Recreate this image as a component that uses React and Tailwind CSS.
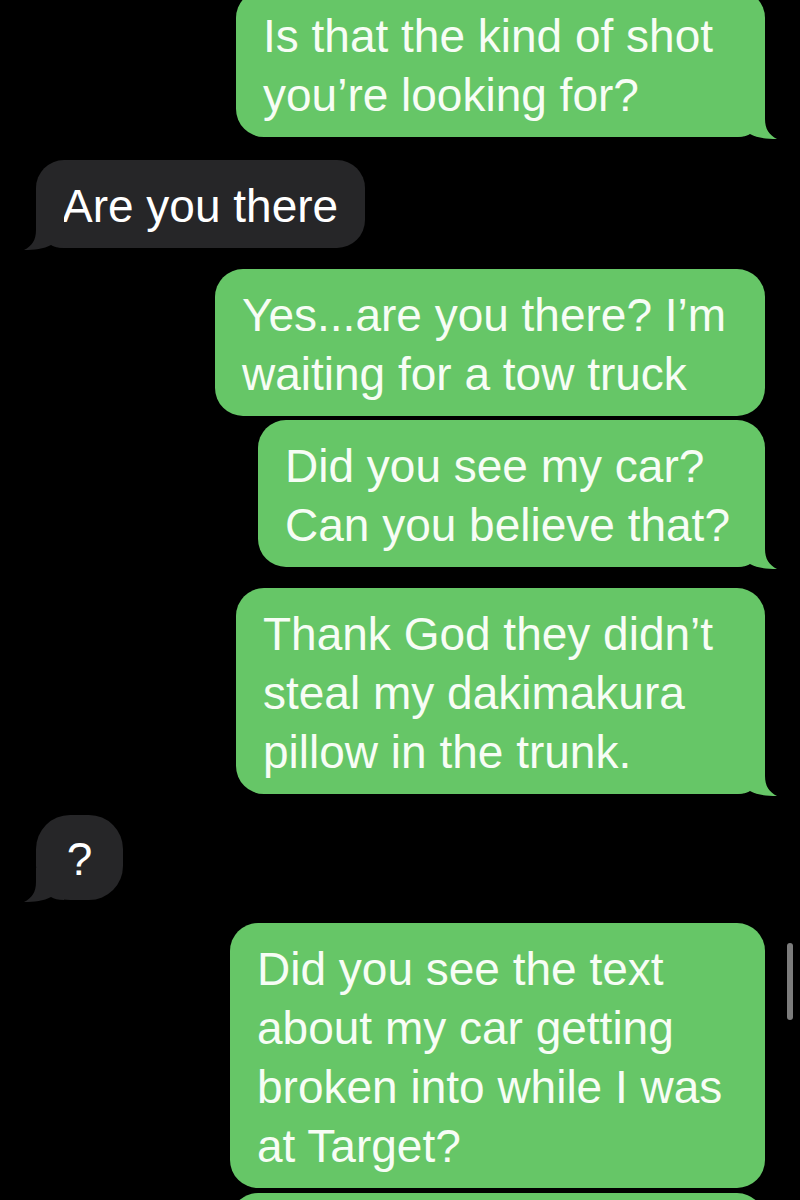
import React from "react";

function Tail({ side, color }) {
  const pos =
    side === "right"
      ? "right-[-12px] bottom-[-2px]"
      : "left-[-12px] bottom-[-2px] -scale-x-100";
  return (
    <svg
      className={`absolute ${pos} h-[34px] w-[40px]`}
      viewBox="0 0 40 34"
      aria-hidden="true"
    >
      <path
        d="M0 32 C6 32 10 31 13 29 C20 33 30 34 40 34 C32 30 28 24 28 14 L28 0 L0 0 Z"
        fill={color}
      />
    </svg>
  );
}

const GREEN = "#66c667";
const GREY = "#262628";

function Sent({ lines, w, mt, tail }) {
  return (
    <div
      className={`relative self-end mr-[35px] rounded-[28px] bg-[#66c667] pl-[27px] pt-[17px] pb-[12px] text-[46px] leading-[59px] text-[#f7fdf5] ${w} ${mt}`}
    >
      {lines.map((l, i) => (
        <div key={i} className="whitespace-nowrap">
          {l}
        </div>
      ))}
      {tail && <Tail side="right" color={GREEN} />}
    </div>
  );
}

export default function App() {
  return (
    <div className="relative h-[1200px] w-[800px] overflow-hidden bg-black font-['Liberation_Sans',Arial,sans-serif]">
      <div className="flex flex-col">
        <Sent
          lines={["Is that the kind of shot", "you\u2019re looking for?"]}
          w="w-[529px]"
          mt="mt-[-10px]"
          tail
        />

        <div className="relative self-start ml-[36px] mt-[23px] w-[329px] rounded-[28px] bg-[#262628] pl-[26px] pt-[17px] pb-[12px] text-[46px] leading-[59px] text-white">
          <div className="whitespace-nowrap">Are you there</div>
          <Tail side="left" color={GREY} />
        </div>

        <Sent
          lines={["Yes...are you there? I\u2019m", "waiting for a tow truck"]}
          w="w-[550px]"
          mt="mt-[21px]"
        />

        <Sent
          lines={["Did you see my car?", "Can you believe that?"]}
          w="w-[507px]"
          mt="mt-[4px]"
          tail
        />

        <Sent
          lines={[
            "Thank God they didn\u2019t",
            "steal my dakimakura",
            "pillow in the trunk.",
          ]}
          w="w-[529px]"
          mt="mt-[21px]"
          tail
        />

        <div className="relative self-start ml-[36px] mt-[21px] flex h-[85px] w-[87px] items-center justify-center rounded-[34px] bg-[#262628] pt-[2px] text-[46px] leading-[58px] text-white">
          <span>?</span>
          <Tail side="left" color={GREY} />
        </div>

        <Sent
          lines={[
            "Did you see the text",
            "about my car getting",
            "broken into while I was",
            "at Target?",
          ]}
          w="w-[535px]"
          mt="mt-[23px]"
        />

        <div className="relative self-end mr-[35px] mt-[5px] h-[88px] w-[535px] rounded-[28px] bg-[#66c667]" />
      </div>

      <div className="absolute left-[787px] top-[943px] h-[77px] w-[6px] rounded-full bg-[#7c7c7c]" />
    </div>
  );
}
